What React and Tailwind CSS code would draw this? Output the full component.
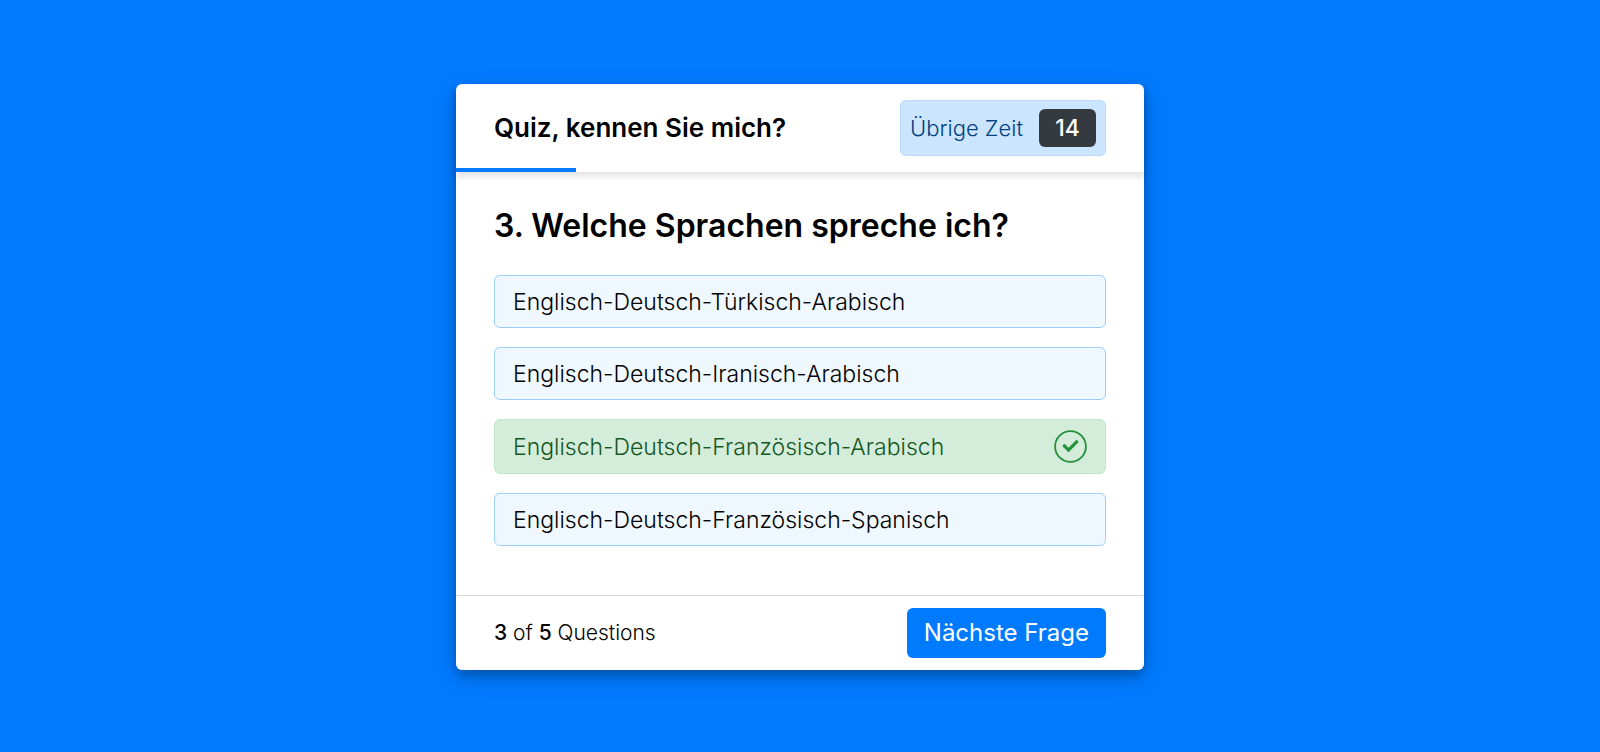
const options = [
  { text: "Englisch-Deutsch-Türkisch-Arabisch" },
  { text: "Englisch-Deutsch-Iranisch-Arabisch" },
  { text: "Englisch-Deutsch-Französisch-Arabisch", correct: true },
  { text: "Englisch-Deutsch-Französisch-Spanisch" },
];

function CheckIcon() {
  return (
    <svg className="size-[33px] shrink-0" viewBox="0 0 33 33" fill="none" aria-hidden="true">
      <circle cx="16.5" cy="16.5" r="15.4" stroke="#23903c" strokeWidth="1.8" />
      <path
        transform="translate(8.5 8) scale(0.03125)"
        fill="#23903c"
        d="M173.898 439.404l-166.4-166.4c-9.997-9.997-9.997-26.206 0-36.204l36.203-36.204c9.997-9.998 26.207-9.998 36.204 0L192 312.69 432.095 72.596c9.997-9.997 26.207-9.997 36.204 0l36.203 36.204c9.997 9.997 9.997 26.206 0 36.204l-294.4 294.401c-9.998 9.997-26.207 9.997-36.204-.001z"
      />
    </svg>
  );
}

function Option({ text, correct }) {
  return (
    <button
      type="button"
      className={
        correct
          ? "flex min-h-[55px] w-full items-center justify-between rounded-md border border-[#c3e6cb] bg-[#d4edda] px-[18px] text-left text-[23px] leading-8 font-light text-[#155724]"
          : "flex min-h-[53px] w-full items-center justify-between rounded-md border border-[#9dcffb] bg-[#f0f8ff] px-[18px] text-left text-[23px] leading-8 font-light"
      }
    >
      <span>{text}</span>
      {correct && <CheckIcon />}
    </button>
  );
}

export default function App() {
  return (
    <main className="flex min-h-screen items-center justify-center bg-[#007bff] pt-0.5 font-['Inter',sans-serif] text-black">
      <section className="w-full max-w-[688px] rounded-md bg-white shadow-[0_5px_10px_rgba(0,0,0,0.2),0_7px_25px_rgba(0,0,0,0.19)]">
        <header className="rounded-t-md shadow-[0_4px_6px_1px_rgba(0,0,0,0.1)]">
          <div className="flex h-[84px] items-center justify-between px-[38px] pt-1">
            <h1 className="text-[26px] leading-8 font-semibold">Quiz, kennen Sie mich?</h1>
            <div className="flex h-14 items-center gap-4 rounded-md border border-[#b8daff] bg-[#cce5ff] px-[9px] text-[#004085]">
              <span className="text-[22px] leading-8 font-light">Übrige Zeit</span>
              <span className="flex h-[38px] w-[57px] items-center justify-center rounded-md bg-[#343a40] text-[23px] font-medium text-white">
                14
              </span>
            </div>
          </div>
          <div className="h-1 w-[120px] bg-[#007bff]" />
        </header>
        <div className="px-[38px] pt-[31px] pb-[49px]">
          <h2 className="text-[32px] leading-[46px] font-semibold">3. Welche Sprachen spreche ich?</h2>
          <div className="mt-[26px] flex flex-col gap-[19px]">
            {options.map((option) => (
              <Option key={option.text} {...option} />
            ))}
          </div>
        </div>
        <footer className="flex h-[75px] items-center justify-between border-t border-[#d6d6d6] px-[38px]">
          <p className="text-[21px] leading-8 font-light">
            <span className="font-medium">3</span> of <span className="font-medium">5</span> Questions
          </p>
          <button
            type="button"
            className="h-[50px] rounded-md bg-[#007bff] px-[17px] text-[24px] leading-8 text-white"
          >
            Nächste Frage
          </button>
        </footer>
      </section>
    </main>
  );
}
